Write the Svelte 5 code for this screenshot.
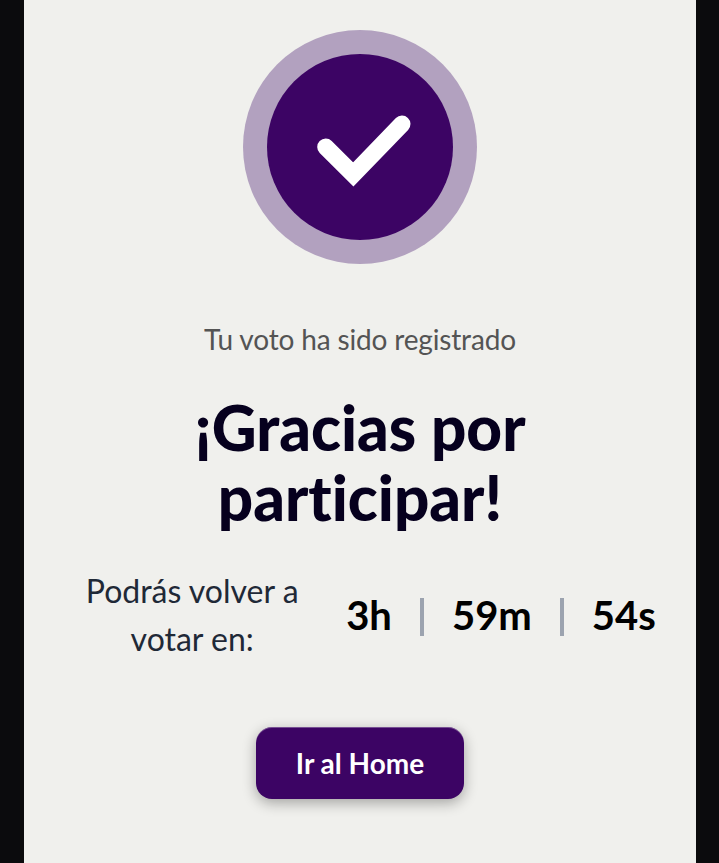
<script>
    let time = ['3h', '59m', '54s'];
</script>

<div class="page">
    <main class="card">
        <div class="ring">
            <div class="disc">
                <svg width="186" height="186" viewBox="0 0 186 186" fill="none">
                    <path d="M58.700 93 L86.300 120.500 L135 70" stroke="#fff" stroke-width="17" stroke-linecap="round" stroke-linejoin="miter" />
                </svg>
            </div>
        </div>

        <p class="sub">Tu voto ha sido registrado</p>
        <h1>¡Gracias por participar!</h1>

        <div class="countdown">
            <p class="label">Podrás volver a votar en:</p>
            <div class="time">
                {#each time as t, i}
                    {#if i > 0}<span class="sep"></span>{/if}
                    <span class="unit">{t}</span>
                {/each}
            </div>
        </div>

        <button>Ir al Home</button>
    </main>
</div>

<style>
    :global(body) {
        background: #0b0b0d;
        font-family: Lato, sans-serif;
        font-variant-ligatures: none;
    }

    .page {
        height: 863px;
        overflow: hidden;
        padding: 0 23px 0 24px;
    }

    .card {
        height: 100%;
        background: #f0f0ed;
        padding-top: 30px;
        display: flex;
        flex-direction: column;
        align-items: center;
        box-sizing: border-box;
    }

    .ring {
        width: 234px;
        height: 234px;
        border-radius: 50%;
        background: #b2a1bf;
        display: flex;
        align-items: center;
        justify-content: center;
    }

    .disc {
        width: 186px;
        height: 186px;
        border-radius: 50%;
        background: #3c0464;
        display: flex;
        align-items: center;
        justify-content: center;
    }

    .sub {
        margin: 57px 0 0;
        font-size: 28px;
        letter-spacing: -0.16px;
        line-height: 36px;
        color: #545454;
    }

    h1 {
        margin: 35px 0 0;
        width: 420px;
        text-align: center;
        font-size: 62px;
        font-weight: 900;
        line-height: 70px;
        color: #06001e;
    }

    .countdown {
        margin-top: 35px;
        display: flex;
        align-items: center;
        gap: 26px;
    }

    .label {
        margin: 0;
        width: 256px;
        text-align: center;
        font-size: 32px;
        line-height: 48px;
        color: #1f2937;
    }

    .time {
        display: flex;
        align-items: center;
        gap: 28px;
    }

    .unit {
        font-size: 40px;
        font-weight: 700;
        line-height: 48px;
        color: #000;
    }

    .sep {
        width: 4px;
        height: 38px;
        margin-top: 4px;
        background: #9ca3af;
    }

    button {
        margin-top: 64px;
        width: 208px;
        height: 72px;
        border: none;
        border-radius: 16px;
        background: #3c0464;
        color: #fff;
        font-family: inherit;
        font-size: 28px;
        font-weight: 700;
        box-shadow: 0 4px 14px rgba(0, 0, 0, 0.32), inset 0 1px 0 rgba(255, 255, 255, 0.3);
    }
</style>
